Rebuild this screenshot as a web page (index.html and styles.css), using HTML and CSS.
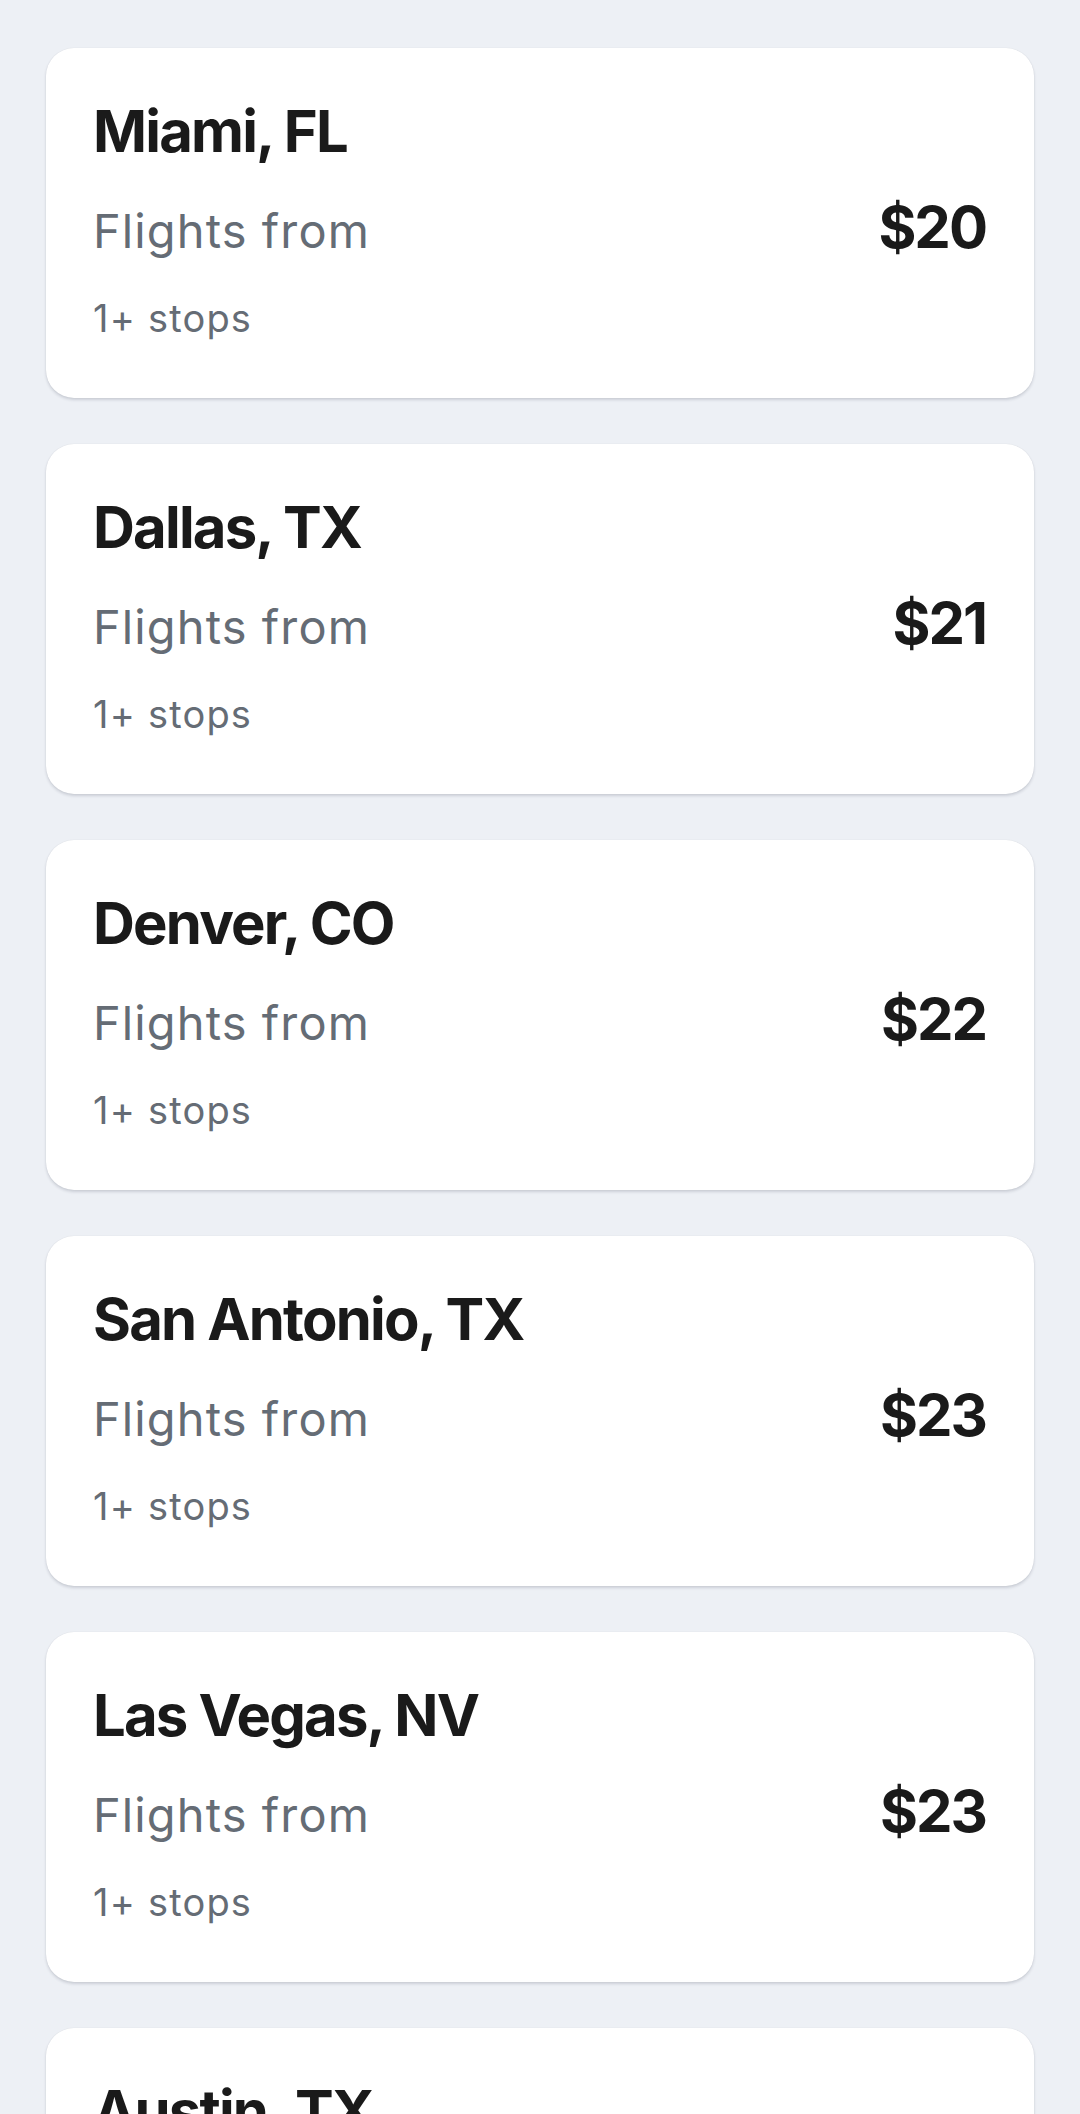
FILE: index.html
```html
<!DOCTYPE html>
<html lang="en">
<head>
    <meta charset="UTF-8">
    <meta name="viewport" content="width=device-width, initial-scale=1.0">
    <title>Cheap flights</title>
    <link rel="stylesheet" href="styles.css">
</head>
<body>
    <div class="deal-list">
        <div class="deal-card">
            <h2 class="deal-city">Miami, FL</h2>
            <div class="deal-row">
                <span class="deal-label">Flights from</span>
                <span class="deal-price">$20</span>
            </div>
            <p class="deal-stops">1+ stops</p>
        </div>

        <div class="deal-card">
            <h2 class="deal-city">Dallas, TX</h2>
            <div class="deal-row">
                <span class="deal-label">Flights from</span>
                <span class="deal-price">$21</span>
            </div>
            <p class="deal-stops">1+ stops</p>
        </div>

        <div class="deal-card">
            <h2 class="deal-city">Denver, CO</h2>
            <div class="deal-row">
                <span class="deal-label">Flights from</span>
                <span class="deal-price">$22</span>
            </div>
            <p class="deal-stops">1+ stops</p>
        </div>

        <div class="deal-card">
            <h2 class="deal-city">San Antonio, TX</h2>
            <div class="deal-row">
                <span class="deal-label">Flights from</span>
                <span class="deal-price">$23</span>
            </div>
            <p class="deal-stops">1+ stops</p>
        </div>

        <div class="deal-card">
            <h2 class="deal-city">Las Vegas, NV</h2>
            <div class="deal-row">
                <span class="deal-label">Flights from</span>
                <span class="deal-price">$23</span>
            </div>
            <p class="deal-stops">1+ stops</p>
        </div>

        <div class="deal-card">
            <h2 class="deal-city">Austin, TX</h2>
            <div class="deal-row">
                <span class="deal-label">Flights from</span>
                <span class="deal-price">$24</span>
            </div>
            <p class="deal-stops">1+ stops</p>
        </div>
    </div>
</body>
</html>
```

FILE: styles.css
```css
body {
    font-family: Inter, "Noto Sans", sans-serif;
    margin: 0;
    padding: 0;
    background-color: #edf0f5;
}

.deal-list {
    display: flex;
    flex-direction: column;
    gap: 46px;
    padding: 48px 46px;
}

.deal-card {
    background-color: #ffffff;
    border-radius: 28px;
    height: 350px;
    box-sizing: border-box;
    padding: 48px 48px 0 47px;
    box-shadow: 0 2px 3px rgba(30, 40, 60, 0.16), 0 0 1px rgba(30, 40, 60, 0.12);
}

.deal-city {
    margin: 0;
    font-size: 58px;
    line-height: 70px;
    font-weight: 700;
    color: #1a1a1a;
    letter-spacing: -1.8px;
}

.deal-row {
    display: flex;
    justify-content: space-between;
    align-items: baseline;
    margin-top: 32px;
    line-height: 58px;
}

.deal-label {
    font-size: 47px;
    color: #656c75;
    letter-spacing: 1.1px;
}

.deal-price {
    font-size: 58px;
    font-weight: 700;
    color: #1a1a1a;
    letter-spacing: -2px;
}

.deal-stops {
    margin: 36px 0 0;
    font-size: 38px;
    line-height: 45px;
    color: #656c75;
    letter-spacing: 1.2px;
}
```
